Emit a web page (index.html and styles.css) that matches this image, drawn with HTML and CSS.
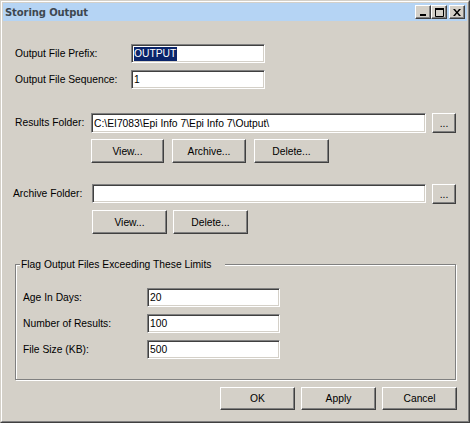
FILE: index.html
```html
<!DOCTYPE html>
<html>
<head>
<meta charset="utf-8">
<link rel="stylesheet" href="styles.css">
</head>
<body>
<div class="window">
  <div class="frame">
    <div class="titlebar">
      <span class="title">Storing Output</span>
      <div class="caption-buttons">
        <span class="cbtn"><svg width="8" height="7" viewBox="0 0 8 7"><rect x="1" y="5" width="6" height="2" fill="#000"/></svg></span>
        <span class="cbtn"><svg width="9" height="9" viewBox="0 0 9 9"><path d="M0.5 0.5h8v8h-8z" fill="none" stroke="#000"/><rect x="0" y="0" width="9" height="2" fill="#000"/></svg></span>
        <span class="cbtn close"><svg width="8" height="7" viewBox="0 0 8 7"><path d="M0 0h2l2 2.5 2-2.5h2l-3 3.5 3 3.5h-2l-2-2.5-2 2.5h-2l3-3.5z" fill="#000"/></svg></span>
      </div>
    </div>
    <div class="content">
      <div class="row row-prefix">
        <span class="lbl lbl-top">Output File Prefix:</span>
        <div class="tb tb-top"><span class="sel">OUTPUT</span></div>
      </div>
      <div class="row row-seq">
        <span class="lbl lbl-top">Output File Sequence:</span>
        <div class="tb tb-top">1</div>
      </div>

      <div class="row row-results">
        <span class="lbl lbl-results">Results Folder:</span>
        <div class="tb tb-folder tb-results">C:\EI7083\Epi Info 7\Epi Info 7\Output\</div>
        <div class="btn btn-dots">...</div>
      </div>
      <div class="btnrow btnrow-results">
        <div class="btn btn-view1">View...</div>
        <div class="btn btn-archive">Archive...</div>
        <div class="btn btn-delete1">Delete...</div>
      </div>

      <div class="row row-archive">
        <span class="lbl lbl-archive">Archive Folder:</span>
        <div class="tb tb-folder tb-archive"></div>
        <div class="btn btn-dots">...</div>
      </div>
      <div class="btnrow btnrow-archive">
        <div class="btn btn-std">View...</div>
        <div class="btn btn-std">Delete...</div>
      </div>

      <div class="group">
        <span class="legend">Flag Output Files Exceeding These Limits</span>
        <div class="row grow">
          <span class="lbl lbl-group">Age In Days:</span>
          <div class="tb tb-group">20</div>
        </div>
        <div class="row grow">
          <span class="lbl lbl-group">Number of Results:</span>
          <div class="tb tb-group">100</div>
        </div>
        <div class="row grow">
          <span class="lbl lbl-group">File Size (KB):</span>
          <div class="tb tb-group">500</div>
        </div>
      </div>

      <div class="btnrow btnrow-bottom">
        <div class="btn btn-dlg">OK</div>
        <div class="btn btn-dlg">Apply</div>
        <div class="btn btn-dlg">Cancel</div>
      </div>
    </div>
  </div>
</div>
</body>
</html>
```

FILE: styles.css
```css
html, body {
  margin: 0;
  padding: 0;
  background: #d4d0c8;
}
body {
  font-family: "Liberation Sans", Arial, sans-serif;
  font-size: 10.3px;
  color: #000;
}
.window {
  width: 470px;
  height: 423px;
  box-sizing: border-box;
  border: 1px solid;
  border-color: #d4d0c8 #404040 #404040 #d4d0c8;
  background: #d4d0c8;
}
.frame {
  height: 100%;
  box-sizing: border-box;
  border: 1px solid;
  border-color: #ffffff #808080 #808080 #ffffff;
  padding: 1px;
  display: flex;
  flex-direction: column;
}
.titlebar {
  height: 18px;
  flex: none;
  background: #b5d4f4;
  display: flex;
  align-items: center;
  padding-left: 2px;
  padding-right: 2px;
}
.title {
  font-family: "DejaVu Sans", Verdana, sans-serif;
  font-weight: bold;
  font-size: 10px;
  color: #3e4850;
  letter-spacing: -0.1px;
}
.caption-buttons {
  margin-left: auto;
  display: flex;
}
.cbtn {
  width: 16px;
  height: 14px;
  box-sizing: border-box;
  background: #d4d0c8;
  border: 1px solid;
  border-color: #ffffff #404040 #404040 #ffffff;
  box-shadow: inset -1px -1px 0 #808080;
  display: flex;
  align-items: center;
  justify-content: center;
}
.cbtn svg { display: block; }
.cbtn.close { margin-left: 2px; }

.content {
  display: flex;
  flex-direction: column;
  padding: 0 10px 0 12px;
}
.row {
  display: flex;
  align-items: flex-start;
}
.lbl {
  flex: none;
  white-space: nowrap;
  line-height: 19px;
}
.tb {
  flex: none;
  box-sizing: border-box;
  height: 19px;
  background: #fff;
  border: 1px solid;
  border-color: #808080 #ffffff #ffffff #808080;
  box-shadow: inset 1px 1px 0 #404040, inset -1px -1px 0 #d4d0c8;
  padding-left: 2px;
  display: flex;
  align-items: center;
  white-space: nowrap;
  overflow: hidden;
}
.sel {
  background: #0a246a;
  color: #fff;
  line-height: 14px;
  padding: 0 1px 0 0;
}
.row-prefix { margin-top: 23px; }
.row-seq { margin-top: 7px; }
.lbl-top { width: 116px; }
.tb-top { width: 134px; }

.row-results { margin-top: 24px; }
.lbl-results { width: 76px; line-height: 20px; }
.tb-results { height: 20px; width: 335px; }
.btn-dots {
  margin-left: 6px;
  width: 24px;
  height: 20px;
}
.row-archive { margin-top: 21px; }
.lbl-archive { margin-left: -2px; width: 79px; }
.tb-archive { width: 334px; }

.btn {
  flex: none;
  box-sizing: border-box;
  background: #d4d0c8;
  border: 1px solid;
  border-color: #ffffff #404040 #404040 #ffffff;
  box-shadow: inset -1px -1px 0 #808080;
  display: flex;
  align-items: center;
  justify-content: center;
  white-space: nowrap;
}
.btnrow {
  display: flex;
}
.btnrow-results {
  margin-top: 6px;
  padding-left: 76px;
  gap: 8px;
}
.btnrow-results .btn { height: 24px; }
.btn-view1 { width: 73px; }
.btn-archive { width: 74px; }
.btn-delete1 { width: 75px; }

.btnrow-archive {
  margin-top: 6px;
  padding-left: 77px;
  gap: 6px;
}
.btn-std { width: 75px; height: 24px; }

.group {
  position: relative;
  margin-top: 30px;
  width: 441px;
  box-sizing: border-box;
  border: 1px solid #808080;
  box-shadow: inset 1px 1px 0 #ffffff, 1px 1px 0 #ffffff;
  padding: 23px 0 20px 7px;
  display: flex;
  flex-direction: column;
  gap: 7px;
}
.legend {
  position: absolute;
  top: -7px;
  left: 4px;
  padding: 0 14px 0 1px;
  line-height: 13px;
  background: #d4d0c8;
  white-space: nowrap;
}
.lbl-group { width: 124px; }
.tb-group { width: 133px; }

.btnrow-bottom {
  margin-top: 7px;
  justify-content: flex-end;
  gap: 6px;
}
.btn-dlg { width: 75px; height: 23px; }
```
